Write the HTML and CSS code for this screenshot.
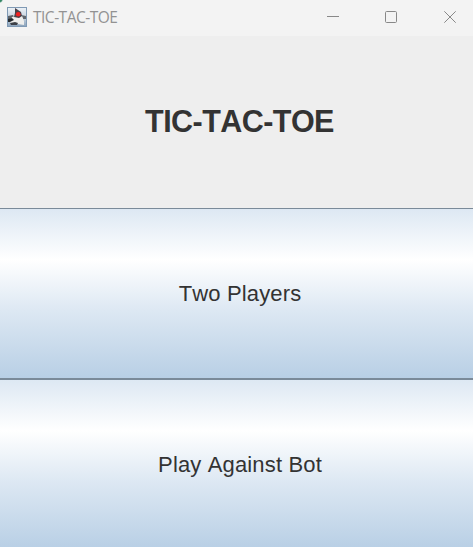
FILE: index.html
```html
<!DOCTYPE html>
<html lang="en">
<head>
<meta charset="utf-8">
<title>TIC-TAC-TOE</title>
<link rel="stylesheet" href="styles.css">
</head>
<body>
<div class="window">
  <header class="titlebar">
    <svg class="app-icon" width="20" height="20" viewBox="0 0 20 20">
      <defs>
        <linearGradient id="sky" x1="0" y1="0" x2="0" y2="1"><stop offset="0" stop-color="#edf2f7"/><stop offset=".55" stop-color="#c3d0dd"/><stop offset="1" stop-color="#8ba3bb"/></linearGradient>
        <filter id="soft"><feGaussianBlur stdDeviation=".65"/></filter>
      </defs>
      <rect x=".5" y=".5" width="19" height="19" fill="url(#sky)" stroke="#7f99b4"/>
      <g filter="url(#soft)">
        <path d="M1 9L6 8L7 10L3 12L1 12Z" fill="#5d6369"/>
        <path d="M14 8L19 9L19 12L16 12Z" fill="#61666d"/>
        <path d="M5 10L9 9L15 9L17 14L17 18L11 17L5 18L3 15Z" fill="#eeeeec"/>
        <path d="M8 1L11 3L14 5L15 9L12 11L7 10L8 6Z" fill="#493f47"/>
        <path d="M1 12L5 11L7 13L3 15L1 15Z" fill="#27292d"/>
        <path d="M3 16L8 15L11 16L10 18L4 18Z" fill="#3e4146"/>
        <circle cx="11.2" cy="7.2" r="2.3" fill="#f02222"/>
      </g>
    </svg>
    <span class="caption">TIC-TAC-TOE</span>
    <div class="controls">
      <svg width="12" height="12" viewBox="0 0 12 12"><path d="M0 5.5H12"/></svg>
      <svg width="12" height="12" viewBox="0 0 12 12"><rect x=".5" y=".5" width="11" height="11" rx="1.1"/></svg>
      <svg width="12" height="12" viewBox="0 0 12 12"><path d="M.3 .3L11.7 11.7M11.7 .3L.3 11.7"/></svg>
    </div>
  </header>
  <main class="menu">
    <h1 class="heading">TIC-TAC-TOE</h1>
    <button class="option">Two Players</button>
    <button class="option">Play Against Bot</button>
  </main>
</div>
</body>
</html>
```
FILE: styles.css
```css
body {
  margin: 0;
  overflow: hidden;
  background: #eee;
}

.window {
  height: 547px;
  overflow: hidden;
  font-family: "Liberation Sans", Arial, sans-serif;
  font-kerning: none;
  color: #333;
}

.titlebar {
  box-sizing: border-box;
  display: flex;
  align-items: center;
  height: 36px;
  padding: 0 17px 2px 7px;
  background: radial-gradient(circle at 0 0, #348665 0 1.5px, #f3f3f3 3px);
}

.caption {
  margin-left: 6px;
  font: 15.5px/20px "Open Sans", "Noto Sans", sans-serif;
  letter-spacing: -0.5px;
  color: #929292;
}

.controls {
  display: flex;
  gap: 46px;
  margin-left: auto;
}

.controls svg {
  fill: none;
  stroke: #888;
}

.controls svg:last-child {
  margin-left: 1px;
}

.menu {
  display: grid;
  grid-template-rows: 172px 171px 171px;
  width: 480px;
}

.heading {
  display: flex;
  align-items: center;
  justify-content: center;
  margin: 0;
  padding: 0 1px 2px 0;
  font-size: 30.5px;
  font-weight: bold;
  letter-spacing: -0.55px;
}

.option {
  padding: 0;
  border: solid #7a8a99;
  border-width: 1px 0;
  background: linear-gradient(#dde8f3, #fff 30%, #dde8f3 60%, #b8cfe5);
  font: 22px "Liberation Sans", Arial, sans-serif;
  font-kerning: none;
  letter-spacing: 0.15px;
  color: #333;
}
```
